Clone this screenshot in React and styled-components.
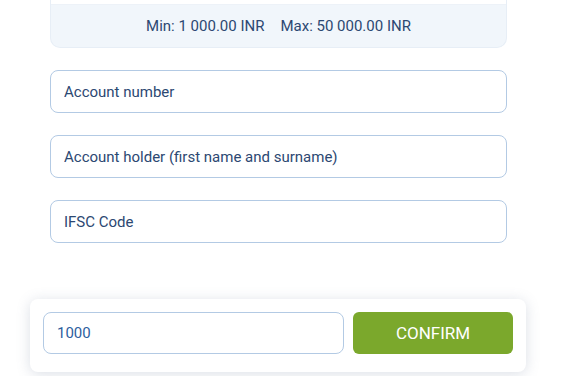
import React from 'react'
import styled, { createGlobalStyle } from 'styled-components'

const Global = createGlobalStyle`
  body {
    margin: 0;
    background: #ffffff;
    font-family: Roboto, "Liberation Sans", sans-serif;
  }
`

const Page = styled.div`
  width: 563px;
  height: 376px;
  overflow: hidden;
  display: flex;
  flex-direction: column;
  align-items: flex-start;
`

const Column = styled.div`
  width: 457px;
  margin-left: 50px;
  display: flex;
  flex-direction: column;
  gap: 22px;
`

const LimitsCard = styled.div`
  margin-top: -11px;
  background: #f1f6fb;
  border: 1px solid #e7eef6;
  border-top: none;
  border-radius: 0 0 10px 10px;
  overflow: hidden;
`

const CardTop = styled.div`
  height: 15px;
  background: #ffffff;
  border-bottom: 1px solid #edf2f8;
`

const Limits = styled.div`
  height: 42px;
  display: flex;
  align-items: center;
  justify-content: center;
  gap: 16px;
  font-size: 15px;
  color: #2c4872;
`

const Field = styled.input`
  box-sizing: border-box;
  width: 100%;
  height: ${p => p.$h || 43}px;
  padding: 0 13px;
  border: 1px solid #b3cae4;
  border-radius: 8px;
  background: #fff;
  font-family: Roboto, "Liberation Sans", sans-serif;
  font-size: 15px;
  color: ${p => p.$tone || '#2c4872'};
  outline: none;

  &::placeholder {
    color: #2c4872;
    opacity: 1;
  }
`

const BottomBar = styled.div`
  box-sizing: border-box;
  width: 496px;
  height: 73px;
  margin: 56px 0 0 30px;
  padding: 13px 13px 0 13px;
  background: #fff;
  border-radius: 8px;
  box-shadow: 0 2px 14px rgba(90, 110, 140, 0.22);
  display: flex;
  gap: 9px;
`

const AmountWrap = styled.div`
  width: 301px;
  flex: none;
`

const Confirm = styled.button`
  width: 160px;
  height: 42px;
  border: none;
  border-radius: 6px;
  background: #7ba82c;
  color: #ffffff;
  font-family: Roboto, "Liberation Sans", sans-serif;
  font-size: 17px;
  font-weight: 400;
  cursor: pointer;
`

export default function App() {
  return (
    <Page>
      <Global />
      <Column>
        <LimitsCard>
          <CardTop />
          <Limits>
            <span>Min: 1 000.00 INR</span>
            <span>Max: 50 000.00 INR</span>
          </Limits>
        </LimitsCard>
        <Field placeholder="Account number" />
        <Field placeholder="Account holder (first name and surname)" />
        <Field placeholder="IFSC Code" />
      </Column>
      <BottomBar>
        <AmountWrap>
          <Field $h={42} $tone="#2d5e9e" defaultValue="1000" />
        </AmountWrap>
        <Confirm>CONFIRM</Confirm>
      </BottomBar>
    </Page>
  )
}
